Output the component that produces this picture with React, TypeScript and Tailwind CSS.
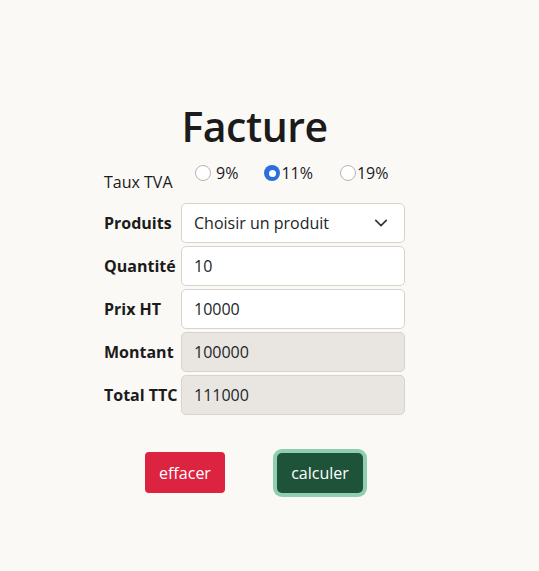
import { useState } from 'react';

const font = { fontFamily: '"Open Sans", "Noto Sans", sans-serif' };

function Radio({ label, checked, onClick, gap }: { label: string; checked: boolean; onClick: () => void; gap: string }) {
  return (
    <label className={`flex items-center ${gap} cursor-pointer`} onClick={onClick}>
      {checked ? (
        <span className="w-4 h-4 rounded-full bg-[#2a6fdb] flex items-center justify-center">
          <span className="w-[7px] h-[7px] rounded-full bg-white" />
        </span>
      ) : (
        <span className="w-4 h-4 rounded-full border border-[#b9b4b0] bg-white" />
      )}
      <span>{label}</span>
    </label>
  );
}

export default function App() {
  const [taux, setTaux] = useState('11');

  const field = 'h-10 w-[224px] rounded-[5px] border border-[#d9d3ce] px-3 flex items-center text-[16px] text-[#212529]';

  return (
    <div style={font} className="min-h-[571px] bg-[#faf9f6] text-[#1b1b1b]">
      <div className="w-[301px] ml-[104px] pt-[97px]">
        <h1 className="text-center text-[41px] font-semibold leading-[58px] tracking-[-0.5px]">Facture</h1>

        <div className="flex flex-col gap-[3px] mt-[3px] text-[16px]">
          <div className="flex h-[42px]">
            <div className="w-[77px] pt-[12px]">Taux TVA</div>
            <div className="flex items-start pt-[3px] pl-[14px]">
              <Radio label="9%" checked={taux === '9'} onClick={() => setTaux('9')} gap="gap-[5px]" />
              <div className="w-[26px]" />
              <Radio label="11%" checked={taux === '11'} onClick={() => setTaux('11')} gap="gap-[1px]" />
              <div className="w-[27px]" />
              <Radio label="19%" checked={taux === '19'} onClick={() => setTaux('19')} gap="gap-[1px]" />
            </div>
          </div>

          <div className="flex items-center">
            <div className="w-[77px] font-bold">Produits</div>
            <div className={`${field} bg-white justify-between pr-[16px]`}>
              <span>Choisir un produit</span>
              <svg width="14" height="14" viewBox="0 0 16 16" fill="none" stroke="#343a40" strokeWidth="2" strokeLinecap="round" strokeLinejoin="round">
                <path d="M2 5l6 6 6-6" />
              </svg>
            </div>
          </div>

          <div className="flex items-center">
            <div className="w-[77px] font-bold">Quantité</div>
            <div className={`${field} bg-white`}>10</div>
          </div>

          <div className="flex items-center">
            <div className="w-[77px] font-bold">Prix HT</div>
            <div className={`${field} bg-white`}>10000</div>
          </div>

          <div className="flex items-center">
            <div className="w-[77px] font-bold">Montant</div>
            <div className={`${field} bg-[#e9e6e1]`}>100000</div>
          </div>

          <div className="flex items-center">
            <div className="w-[77px] font-bold whitespace-nowrap">Total TTC</div>
            <div className={`${field} bg-[#e9e6e1]`}>111000</div>
          </div>
        </div>

        <div className="flex items-center mt-[37px] ml-[41px] gap-[52px]">
          <button className="h-[41px] w-[80px] rounded-[4px] bg-[#dc2340] text-white text-[16px]">effacer</button>
          <button className="h-[40px] w-[86px] rounded-[5px] bg-[#1e5339] text-white text-[16px] ring-4 ring-[#8fcfae]">calculer</button>
        </div>
      </div>
    </div>
  );
}
